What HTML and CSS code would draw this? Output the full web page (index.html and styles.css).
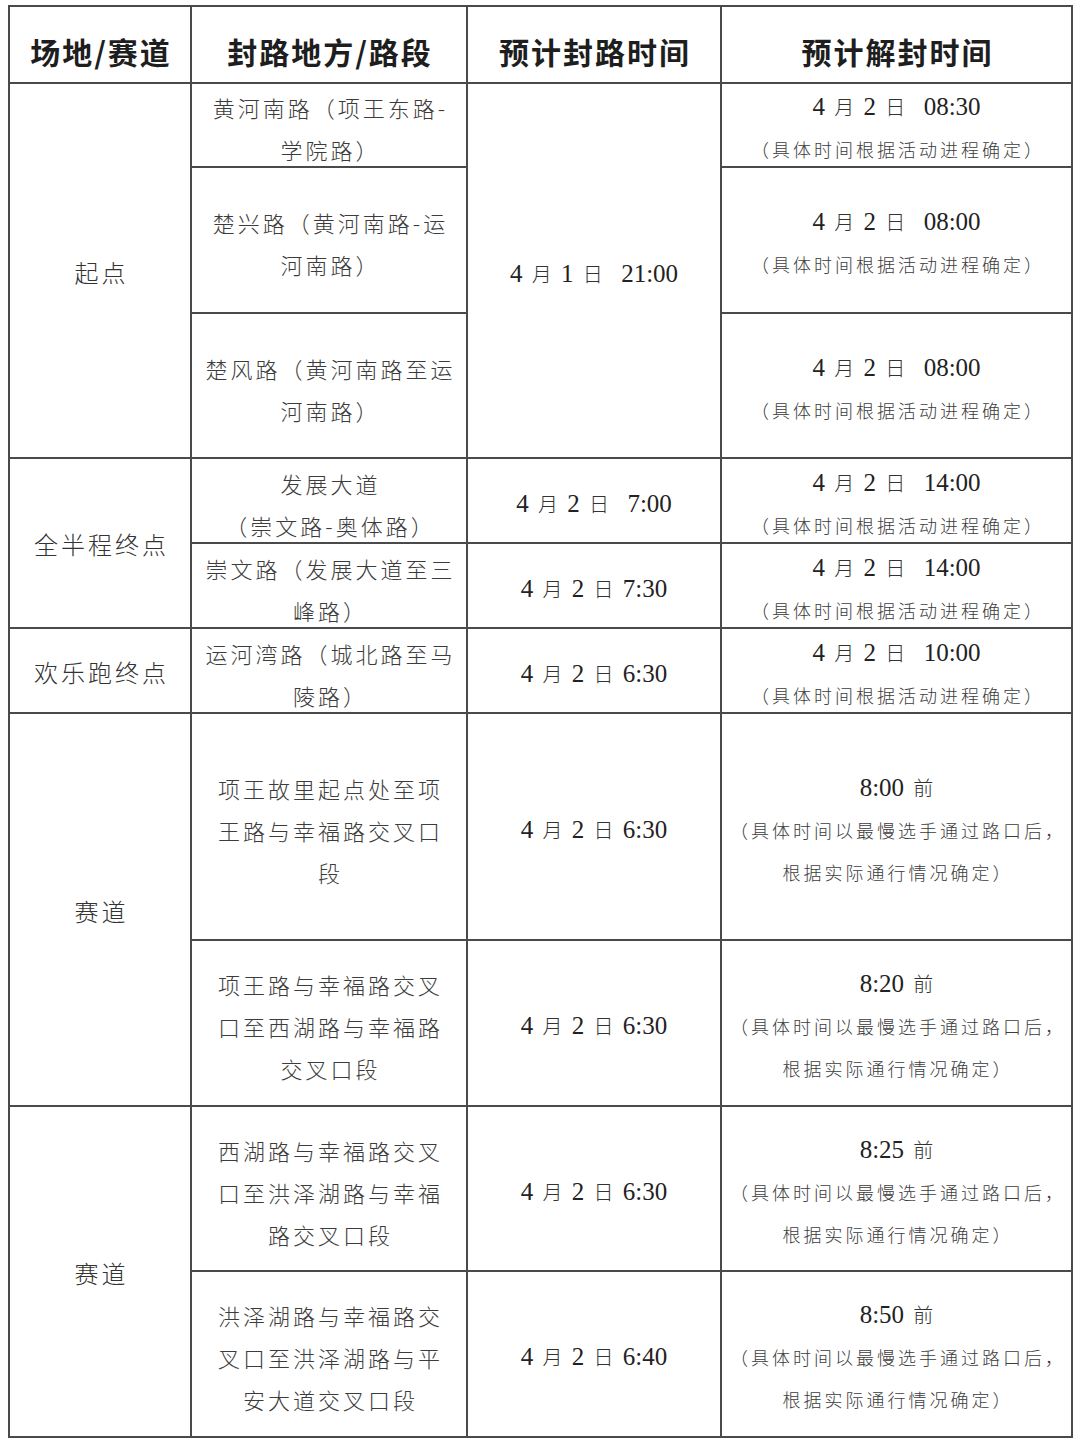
FILE: index.html
```html
<!DOCTYPE html>
<html lang="zh-CN">
<head>
<meta charset="utf-8">
<title>封路时间表</title>
<link rel="stylesheet" href="styles.css">
</head>
<body>
<div class="table">
  <div class="cell head">场地/赛道</div>
  <div class="cell head">封路地方/路段</div>
  <div class="cell head">预计封路时间</div>
  <div class="cell head">预计解封时间</div>

  <div class="cell place span3">起点</div>
  <div class="cell road">黄河南路（项王东路-<br>学院路）</div>
  <div class="cell span3"><div class="time-line"><span class="n">4</span> <span class="cj">月</span> <span class="n">1</span> <span class="cj">日</span>&nbsp; <span class="n">21:00</span></div></div>
  <div class="cell"><div class="time-line"><span class="n">4</span> <span class="cj">月</span> <span class="n">2</span> <span class="cj">日</span>&nbsp; <span class="n">08:30</span></div><div class="note">（具体时间根据活动进程确定）</div></div>

  <div class="cell road">楚兴路（黄河南路-运<br>河南路）</div>
  <div class="cell"><div class="time-line"><span class="n">4</span> <span class="cj">月</span> <span class="n">2</span> <span class="cj">日</span>&nbsp; <span class="n">08:00</span></div><div class="note">（具体时间根据活动进程确定）</div></div>

  <div class="cell road">楚风路（黄河南路至运<br>河南路）</div>
  <div class="cell"><div class="time-line"><span class="n">4</span> <span class="cj">月</span> <span class="n">2</span> <span class="cj">日</span>&nbsp; <span class="n">08:00</span></div><div class="note">（具体时间根据活动进程确定）</div></div>

  <div class="cell place span2">全半程终点</div>
  <div class="cell road">发展大道<br>（崇文路-奥体路）</div>
  <div class="cell"><div class="time-line"><span class="n">4</span> <span class="cj">月</span> <span class="n">2</span> <span class="cj">日</span>&nbsp; <span class="n">7:00</span></div></div>
  <div class="cell"><div class="time-line"><span class="n">4</span> <span class="cj">月</span> <span class="n">2</span> <span class="cj">日</span>&nbsp; <span class="n">14:00</span></div><div class="note">（具体时间根据活动进程确定）</div></div>

  <div class="cell road">崇文路（发展大道至三<br>峰路）</div>
  <div class="cell"><div class="time-line"><span class="n">4</span> <span class="cj">月</span> <span class="n">2</span> <span class="cj">日</span> <span class="n">7:30</span></div></div>
  <div class="cell"><div class="time-line"><span class="n">4</span> <span class="cj">月</span> <span class="n">2</span> <span class="cj">日</span>&nbsp; <span class="n">14:00</span></div><div class="note">（具体时间根据活动进程确定）</div></div>

  <div class="cell place">欢乐跑终点</div>
  <div class="cell road">运河湾路（城北路至马<br>陵路）</div>
  <div class="cell"><div class="time-line"><span class="n">4</span> <span class="cj">月</span> <span class="n">2</span> <span class="cj">日</span> <span class="n">6:30</span></div></div>
  <div class="cell"><div class="time-line"><span class="n">4</span> <span class="cj">月</span> <span class="n">2</span> <span class="cj">日</span>&nbsp; <span class="n">10:00</span></div><div class="note">（具体时间根据活动进程确定）</div></div>

  <div class="cell place span2">赛道</div>
  <div class="cell road">项王故里起点处至项<br>王路与幸福路交叉口<br>段</div>
  <div class="cell"><div class="time-line"><span class="n">4</span> <span class="cj">月</span> <span class="n">2</span> <span class="cj">日</span> <span class="n">6:30</span></div></div>
  <div class="cell"><div class="time-line"><span class="n">8:00</span> <span class="cj">前</span></div><div class="note">（具体时间以最慢选手通过路口后，</div><div class="note">根据实际通行情况确定）</div></div>

  <div class="cell road">项王路与幸福路交叉<br>口至西湖路与幸福路<br>交叉口段</div>
  <div class="cell"><div class="time-line"><span class="n">4</span> <span class="cj">月</span> <span class="n">2</span> <span class="cj">日</span> <span class="n">6:30</span></div></div>
  <div class="cell"><div class="time-line"><span class="n">8:20</span> <span class="cj">前</span></div><div class="note">（具体时间以最慢选手通过路口后，</div><div class="note">根据实际通行情况确定）</div></div>

  <div class="cell place span2">赛道</div>
  <div class="cell road">西湖路与幸福路交叉<br>口至洪泽湖路与幸福<br>路交叉口段</div>
  <div class="cell"><div class="time-line"><span class="n">4</span> <span class="cj">月</span> <span class="n">2</span> <span class="cj">日</span> <span class="n">6:30</span></div></div>
  <div class="cell"><div class="time-line"><span class="n">8:25</span> <span class="cj">前</span></div><div class="note">（具体时间以最慢选手通过路口后，</div><div class="note">根据实际通行情况确定）</div></div>

  <div class="cell road">洪泽湖路与幸福路交<br>叉口至洪泽湖路与平<br>安大道交叉口段</div>
  <div class="cell"><div class="time-line"><span class="n">4</span> <span class="cj">月</span> <span class="n">2</span> <span class="cj">日</span> <span class="n">6:40</span></div></div>
  <div class="cell"><div class="time-line"><span class="n">8:50</span> <span class="cj">前</span></div><div class="note">（具体时间以最慢选手通过路口后，</div><div class="note">根据实际通行情况确定）</div></div>
</div>
</body>
</html>
```

FILE: styles.css
```css
html, body {
  margin: 0;
  padding: 0;
  background: #ffffff;
}

body {
  font-family: "Noto Sans CJK SC", "Noto Sans", sans-serif;
  color: #3a3a3a;
  text-spacing-trim: space-all;
}

.table {
  display: grid;
  grid-template-columns: 182px 276px 254px 351px;
  grid-template-rows: 77px 84px 146px 145px 85px 85px 85px 227px 166px 165px 166px;
  width: max-content;
  margin: 5px 0 0 8px;
  border-top: 2px solid #4a4a4a;
  border-left: 2px solid #4a4a4a;
}

.cell {
  box-sizing: border-box;
  border-right: 2px solid #4a4a4a;
  border-bottom: 2px solid #4a4a4a;
  display: flex;
  flex-direction: column;
  align-items: center;
  justify-content: center;
  text-align: center;
  padding-top: 6px;
  line-height: 42px;
  white-space: nowrap;
}

.span2 { grid-row: span 2; }
.span3 { grid-row: span 3; }

.head {
  font-size: 30px;
  font-weight: 700;
  color: #1e1e1e;
  letter-spacing: 2px;
  padding-top: 12px;
  padding-left: 2px;
}

.place {
  font-size: 24px;
  font-weight: 300;
  letter-spacing: 3px;
  padding-left: 3px;
  padding-top: 2px;
  color: #333;
}

.road {
  font-size: 22px;
  font-weight: 300;
  letter-spacing: 3px;
  padding-left: 3px;
  color: #3c3c3c;
}

.time-line {
  font-family: "Liberation Serif", "Noto Sans CJK SC", serif;
  font-size: 25px;
  color: #222;
  line-height: 42px;
  word-spacing: 3px;
}

.n {
  font-family: "Liberation Serif", serif;
}

.cj {
  font-family: "Noto Sans CJK SC", sans-serif;
  font-size: 20px;
  font-weight: 300;
  color: #333;
}

.note {
  font-size: 18px;
  font-weight: 300;
  letter-spacing: 3px;
  padding-left: 3px;
  color: #3c3c3c;
  line-height: 42px;
}
```
